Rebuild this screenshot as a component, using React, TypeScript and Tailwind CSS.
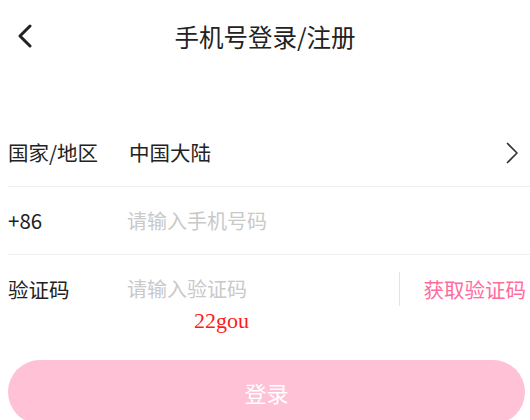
import React from 'react';

const cjk = "font-['Noto_Sans_CJK_SC','Noto_Sans',sans-serif]";

const BackArrow: React.FC = () => (
  <svg width="16" height="24" viewBox="0 0 16 24" fill="none">
    <path d="M13 2 L3 12 L13 22" stroke="#222" strokeWidth="3" strokeLinecap="round" strokeLinejoin="round" />
  </svg>
);

const Chevron: React.FC = () => (
  <svg width="14" height="22" viewBox="0 0 14 22" fill="none">
    <path d="M2 1 L12 11 L2 21" stroke="#333" strokeWidth="1.6" strokeLinejoin="round" />
  </svg>
);

export default function App() {
  return (
    <div className={`w-[530px] h-[420px] overflow-hidden bg-white ${cjk}`}>
      {/* Header */}
      <header className="relative h-[74px] flex items-center justify-center">
        <button className="absolute left-[17px] top-[24px]">
          <BackArrow />
        </button>
        <h1 className="text-[24.5px] text-[#222] leading-none">手机号登录/注册</h1>
      </header>

      {/* Form rows */}
      <div className="mt-[45px] pl-2">
        <div className="h-[68px] flex items-center border-b border-[#efefef] text-[20.5px] text-[#222]">
          <span className="w-[121px] leading-none">国家/地区</span>
          <span className="flex-1 leading-none">中国大陆</span>
          <span className="mr-[11px] flex items-center">
            <Chevron />
          </span>
        </div>

        <div className="h-[68px] flex items-center border-b border-[#efefef]">
          <span className="w-[119px] leading-none text-[20.5px] text-[#222]">+86</span>
          <span className="flex-1 leading-none text-[20px] text-[#c9c9c9]">请输入手机号码</span>
        </div>

        <div className="pt-[17px] h-[51px] flex items-center">
          <span className="w-[119px] leading-none text-[20.5px] text-[#222]">验证码</span>
          <span className="flex-1 leading-none text-[20px] text-[#c9c9c9]">请输入验证码</span>
          <span className="self-stretch w-px bg-[#e4e4e4]" />
          <button className="ml-[24px] mr-[4px] leading-none text-[20.5px] text-[#ff6b9d]">获取验证码</button>
        </div>
      </div>

      <div className="mt-[3px] pl-[194px] h-[24px] leading-[24px] text-[22px] text-[#ff1a1a] font-['Liberation_Serif',serif]">
        22gou
      </div>

      <div className="mt-[27px] px-2 pr-[5px]">
        <button className="w-full h-[64px] rounded-full bg-[#ffc1d5] text-white text-[22px] flex items-center justify-center">
          登录
        </button>
      </div>
    </div>
  );
}
